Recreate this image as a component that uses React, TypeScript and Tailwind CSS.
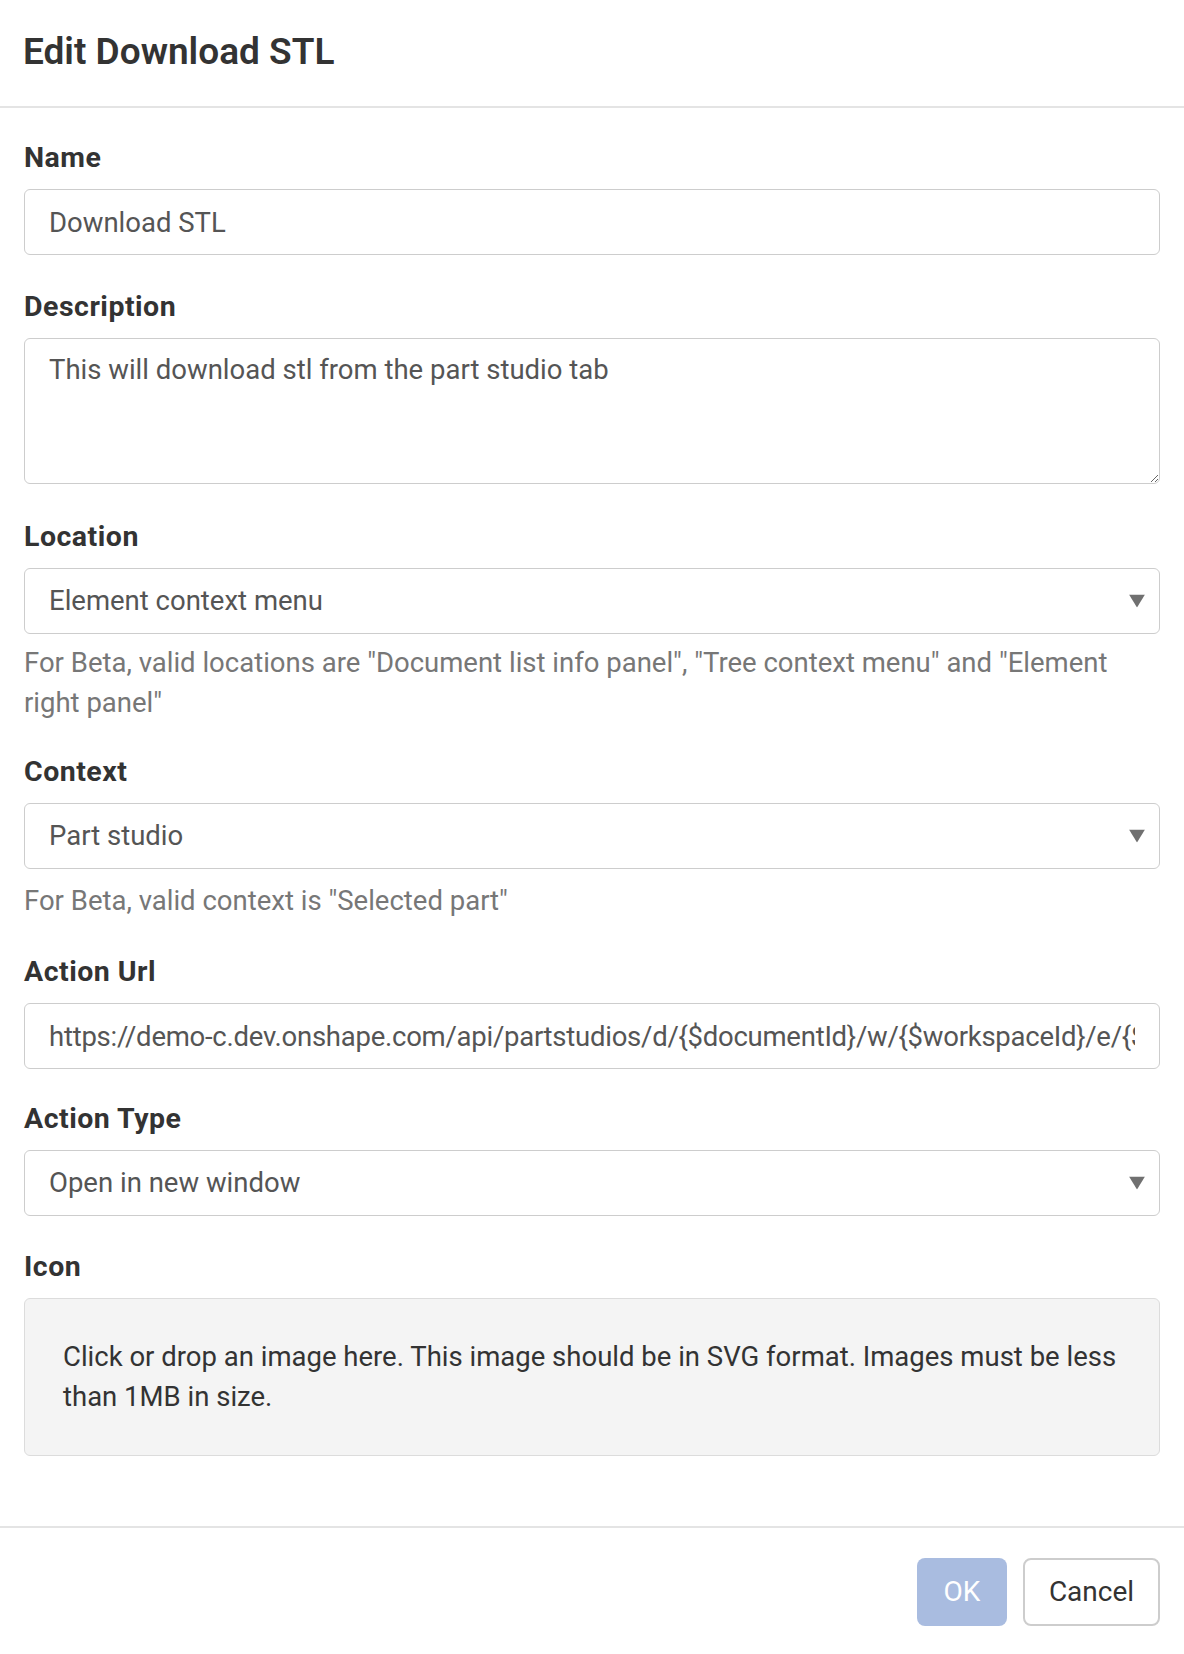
import React from 'react';

const font = { fontFamily: 'Roboto, "Noto Sans", sans-serif' };

const Label: React.FC<{ children: React.ReactNode }> = ({ children }) => (
    <div className="text-[28.5px] leading-[32px] font-bold tracking-[0.5px] text-[#333] mb-[15px]">{children}</div>
);

const Select: React.FC<{ value: string }> = ({ value }) => (
    <div className="relative h-[66px] border border-[#cdcdcd] rounded-[6px] bg-white flex items-center pl-[24px] pr-[50px]">
        <span className="text-[27.5px] text-[#555]">{value}</span>
        {/* caret */}
        <svg className="absolute right-[14px] top-1/2 -translate-y-1/2" width="16" height="13" viewBox="0 0 16 13">
            <path d="M0 0 H16 L8 13 Z" fill="#707070" />
        </svg>
    </div>
);

export default function App() {
    return (
        <div className="w-[1184px] min-h-[1654px] bg-white" style={font}>
            {/* Header */}
            <div className="h-[108px] border-b-2 border-[#e4e4e4] flex items-center px-[23px]">
                <h1 className="text-[37px] font-semibold text-[#333] -mt-[2px]">Edit Download STL</h1>
            </div>

            {/* Body */}
            <div className="px-[24px] pt-[34px] pb-[70px] flex flex-col">
                <Label>Name</Label>
                <input
                    readOnly
                    value="Download STL"
                    className="h-[66px] border border-[#cdcdcd] rounded-[6px] px-[24px] text-[27.5px] text-[#555] outline-none"
                />

                <div className="mt-[36px]">
                    <Label>Description</Label>
                    <textarea
                        readOnly
                        value="This will download stl from the part studio tab"
                        className="w-full h-[146px] border border-[#cdcdcd] rounded-[6px] px-[24px] py-[13px] text-[27.5px] leading-[36px] text-[#555] outline-none"
                    />
                </div>

                <div className="mt-[30px]">
                    <Label>Location</Label>
                    <Select value="Element context menu" />
                    <p className="mt-[9px] text-[27.5px] leading-[40px] text-[#777]">
                        For Beta, valid locations are "Document list info panel", "Tree context menu" and "Element right panel"
                    </p>
                </div>

                <div className="mt-[33px]">
                    <Label>Context</Label>
                    <Select value="Part studio" />
                    <p className="mt-[12px] text-[27.5px] leading-[40px] text-[#777]">For Beta, valid context is "Selected part"</p>
                </div>

                <div className="mt-[35px]">
                    <Label>Action Url</Label>
                    <input
                        readOnly
                        value="https://demo-c.dev.onshape.com/api/partstudios/d/{$documentId}/w/{$workspaceId}/e/{$elementId}/stl"
                        className="h-[66px] border border-[#cdcdcd] rounded-[6px] px-[24px] text-[27.5px] tracking-[-0.25px] text-[#555] outline-none w-full"
                    />
                </div>

                <div className="mt-[34px]">
                    <Label>Action Type</Label>
                    <Select value="Open in new window" />
                </div>

                <div className="mt-[35px]">
                    <Label>Icon</Label>
                    <div className="h-[158px] border border-[#dcdcdc] rounded-[6px] bg-[#f4f4f4] px-[38px] py-[38px] text-[27.5px] leading-[40px] text-[#333]">
                        Click or drop an image here. This image should be in SVG format. Images must be less than 1MB in size.
                    </div>
                </div>
            </div>

            {/* Footer */}
            <div className="border-t-2 border-[#e4e4e4] flex justify-end gap-[16px] px-[24px] pt-[30px] pb-[28px]">
                <button className="w-[90px] h-[68px] rounded-[8px] bg-[#a9bce0] text-white text-[28px]">OK</button>
                <button className="w-[137px] h-[68px] rounded-[8px] border-2 border-[#cdcdcd] bg-white text-[#333] text-[28px]">
                    Cancel
                </button>
            </div>
        </div>
    );
}
